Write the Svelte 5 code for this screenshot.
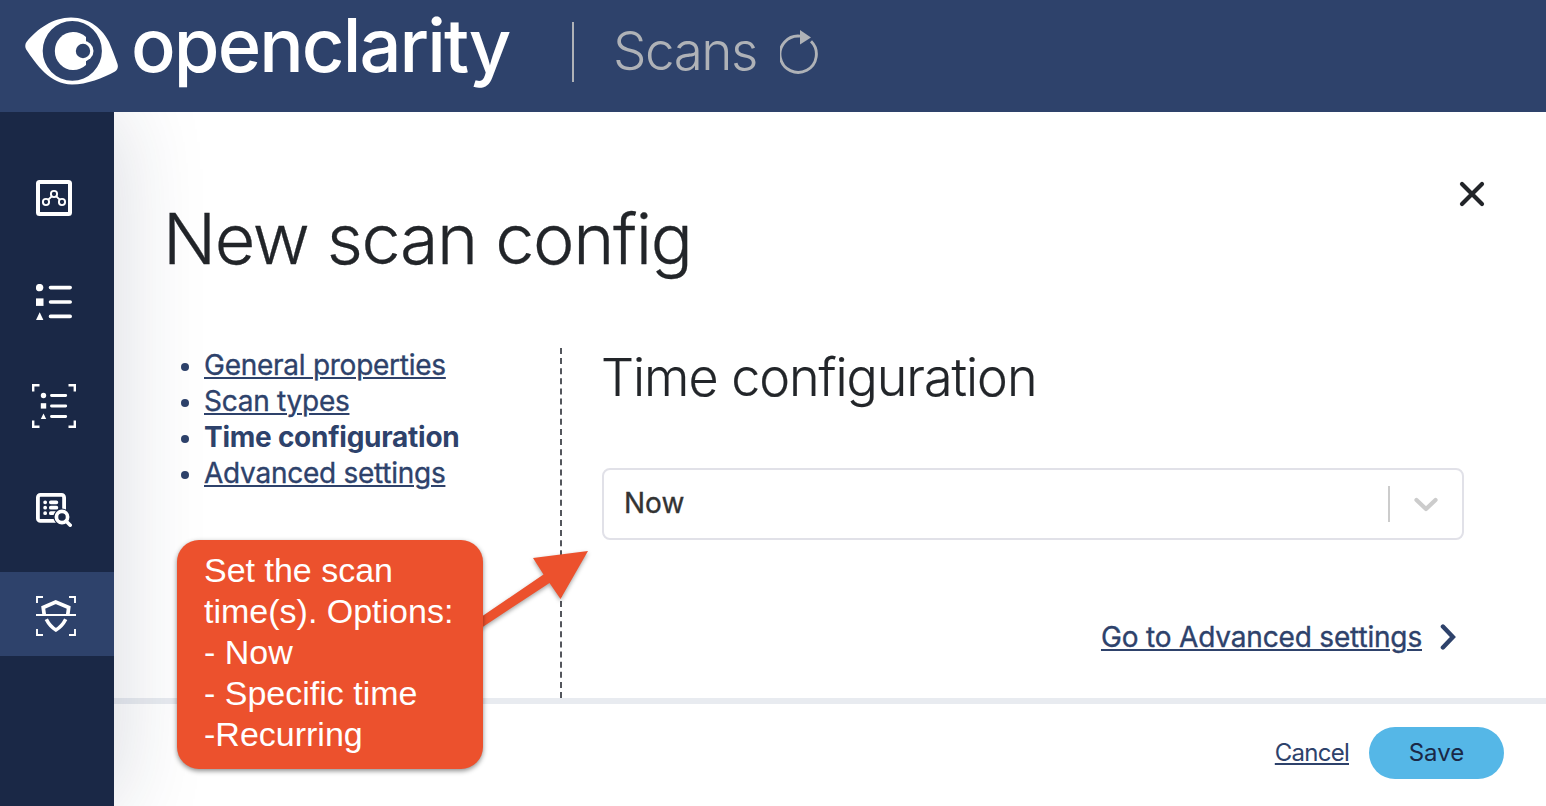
<script>
  const links = ['General properties', 'Scan types', 'Time configuration', 'Advanced settings'];
  const active = 'Time configuration';
  const note = ['Set the scan', 'time(s). Options:', '- Now', '- Specific time', '-Recurring'];
</script>

<div class="page">
  <header>
    <svg class="eye" width="94" height="69" viewBox="0 0 94 69">
      <path fill="#fff" fill-rule="evenodd" d="M1.500 25C12 12 28 0.500 46 0.500C65 0.500 78 13 84 25C87 32 90 40 92.500 47C93.500 50 92.500 53 90 54.500C78 61 62 67.500 47 67.500C25 67.500 11 47 1.200 32.500C-0.200 30 0 27 1.500 25ZM47.300 4A29.600 29.900 0 1 0 47.300 63.800A29.600 29.900 0 1 0 47.300 4Z" />
      <path d="M61 20V48A18.600 19 0 1 1 61 20Z" fill="#fff" />
      <circle cx="58.200" cy="34" r="10.300" fill="#fff" />
      <circle cx="58" cy="34" r="7.200" fill="#2e426b" />
    </svg>
    <span class="brand">openclarity</span>
    <span class="rule"></span>
    <span class="crumb">Scans</span>
    <svg class="reload" width="41" height="46" viewBox="0 0 41 46">
      <path d="M31 11.300A18.200 18.200 0 1 1 20 6.100" fill="none" stroke="#afb2b7" stroke-width="2.900" />
      <path d="M20 0L31 7.500L20 14.500Z" fill="#afb2b7" />
    </svg>
  </header>

  <div class="body">
    <nav>
      <a class="item" href="#dashboard" aria-label="Dashboard">
        <svg width="36" height="36" viewBox="0 0 36 36" fill="none" stroke="#fff">
          <rect x="2" y="2" width="32" height="32" rx="1.500" stroke-width="4" />
          <g stroke-width="1.900">
            <circle cx="10" cy="22" r="3.100" />
            <circle cx="18" cy="14" r="3.100" />
            <circle cx="26" cy="22" r="3.100" />
            <path d="M12.300 19.700L15.700 16.300M20.300 16.300L23.700 19.700" />
          </g>
        </svg>
      </a>
      <a class="item" href="#assets" aria-label="Assets">
        <svg width="36" height="36" viewBox="0 0 36 36" fill="#fff">
          <circle cx="3.600" cy="3.600" r="3.700" />
          <rect x="0" y="14.400" width="7.500" height="7.500" />
          <path d="M3.700 28.300L7.400 36H0Z" />
          <path d="M14.500 3.600H34.200M14.500 18H34.200M14.500 32.400H34.200" stroke="#fff" stroke-width="3.600" stroke-linecap="round" />
        </svg>
      </a>
      <a class="item" href="#asset-scans" aria-label="Asset scans">
        <svg width="44" height="44" viewBox="0 0 44 44" fill="#fff">
          <path d="M1.200 7.500V1.200H7.500M36.500 1.200H42.800V7.500M42.800 36.500V42.800H36.500M7.500 42.800H1.200V36.500" fill="none" stroke="#fff" stroke-width="2.400" />
          <circle cx="11.500" cy="11.500" r="2.700" />
          <rect x="8.800" y="19.200" width="5.400" height="5.400" />
          <path d="M11.500 29.500L14.200 35H8.800Z" />
          <path d="M19.500 11.500H33.700M19.500 22H33.700M19.500 32.500H33.700" stroke="#fff" stroke-width="2.900" stroke-linecap="round" />
        </svg>
      </a>
      <a class="item" href="#findings" aria-label="Findings">
        <svg width="36" height="34" viewBox="0 0 36 34" fill="none" stroke="#fff">
          <rect x="1.900" y="1.900" width="26.200" height="26" rx="2.500" stroke-width="3.800" />
          <path d="M9.100 9.300H9.200M9.100 14.700H9.200M9.100 20.200H9.200" stroke-width="3.700" stroke-linecap="round" />
          <path d="M14.800 9.300H20.400M14.800 14.700H20.400M14.800 20.200H19" stroke-width="3.700" stroke-linecap="round" />
          <circle cx="26" cy="24" r="8.600" fill="#1a2846" stroke="none" />
          <circle cx="26" cy="24" r="5.600" stroke-width="3.700" />
          <path d="M30 28L34.200 32.200" stroke-width="3.600" stroke-linecap="round" />
        </svg>
      </a>
      <a class="item current" href="#scans" aria-label="Scans">
        <svg width="40" height="40" viewBox="0 0 40 40" fill="none" stroke="#fff">
          <path d="M1 7V1H7M33 1H39V7M39 33V39H33M7 39H1V33" stroke-width="1.900" />
          <path d="M0 19H40" stroke-width="2" />
          <path d="M8.200 18.500L7.200 11.500L19.700 6L32.700 11.500L31.800 18.500" stroke-width="3.700" />
          <path d="M10.300 23.300Q14 30.500 19.900 34Q26 30.500 29.700 23.300" stroke-width="3.600" />
        </svg>
      </a>
    </nav>

    <main>
      <button class="close" aria-label="Close">
        <svg width="26" height="26" viewBox="0 0 26 26"><path d="M3 3L23 23M23 3L3 23" stroke="#222529" stroke-width="4.200" stroke-linecap="round" /></svg>
      </button>
      <h1>New scan config</h1>
      <div class="cols">
        <ul>
          {#each links as link}
            <li>{#if link === active}<b>{link}</b>{:else}<a href="#step">{link}</a>{/if}</li>
          {/each}
        </ul>
        <section>
          <h2>Time configuration</h2>
          <div class="select">
            <span>Now</span>
            <i></i>
            <svg width="26" height="18" viewBox="0 0 26 18"><path d="M3.500 5L13 14L22.500 5" fill="none" stroke="#ccc" stroke-width="4.200" stroke-linecap="round" stroke-linejoin="round" /></svg>
          </div>
          <div class="next">
            <a href="#next">Go to Advanced settings</a>
            <svg width="18" height="28" viewBox="0 0 18 28"><path d="M2.900 3.500L12.900 14L2.900 24.500" fill="none" stroke="#2e426b" stroke-width="4.400" stroke-linecap="round" /></svg>
          </div>
        </section>
      </div>
      <footer>
        <a href="#cancel">Cancel</a>
        <button class="save">Save</button>
      </footer>
    </main>
  </div>

  <svg class="arrow" width="130" height="100" viewBox="0 0 130 100">
    <path d="M0 84.500L73.500 34.500L63 18L118 11L90.500 59L79.500 43L13 86.700L0 95Z" fill="#ec512d" />
  </svg>
  <div class="callout">
    {#each note as line}<div>{line}</div>{/each}
  </div>
</div>

<style>
  :global(body) { margin: 0; }
  .page {
    position: relative;
    width: 1546px;
    height: 806px;
    overflow: hidden;
    background: #fff;
    color: #222529;
    font: 400 28px/36px Inter, sans-serif;
  }
  header { height: 112px; background: #2e426b; display: flex; position: relative; z-index: 2; }
  .eye { margin: 17px 12px 0 25px; flex: none; }
  .brand { width: 441px; font-size: 74px; line-height: 90px; font-weight: 500; letter-spacing: -1.9px; color: #fff; }
  .rule { width: 2px; height: 60px; margin-top: 22px; background: #afb2b7; }
  .crumb { margin: 19px 23px 0 39px; font-size: 53px; line-height: 64px; font-weight: 300; letter-spacing: -1.5px; color: #afb2b7; }
  .reload { margin-top: 30px; }

  .body { display: flex; height: 694px; }
  nav {
    position: relative;
    z-index: 1;
    width: 114px;
    box-sizing: border-box;
    padding-top: 44px;
    display: flex;
    flex-direction: column;
    gap: 20px;
    background: #1a2846;
    box-shadow: 0 0 92px rgba(26, 40, 70, 0.18);
  }
  .item { height: 84px; box-sizing: border-box; padding-right: 6px; display: grid; place-items: center; }
  .current { background: #2e426b; padding: 4px 2px 0 0; }
  .item svg { display: block; }

  main { position: relative; width: 1432px; display: flex; flex-direction: column; }
  .close { position: absolute; left: 1345px; top: 69px; padding: 0; border: 0; background: none; line-height: 0; }
  h1 { margin: 85px 0 67px 49px; font-size: 70px; line-height: 84px; font-weight: 300; letter-spacing: -1.36px; -webkit-text-stroke: 0.3px; }
  .cols { display: flex; height: 350px; }
  ul { list-style: none; width: 446px; box-sizing: border-box; margin: -1px 0 0; padding: 0 0 0 90px; color: #2e426b; letter-spacing: -0.26px; }
  li { display: flex; align-items: center; }
  li::before { content: ''; width: 8px; height: 8px; margin: 3px 15px 0 -23px; border-radius: 50%; background: #2e426b; }
  b { font-weight: 700; letter-spacing: -0.25px; }
  a { color: #2e426b; text-decoration: underline; text-decoration-thickness: 2px; text-underline-offset: 2px; }
  li a, .next a, .select span { -webkit-text-stroke: 0.35px; }
  section { flex: 1; border-left: 2px dashed #53565c; padding: 0 82px 0 40px; }
  h2 { margin: -1px 0 59px -1px; font-size: 52px; line-height: 62px; font-weight: 300; letter-spacing: -1.04px; -webkit-text-stroke: 0.2px; }
  .select { height: 72px; box-sizing: border-box; border: 2px solid #e1e1e8; border-radius: 8px; display: flex; align-items: center; padding: 0 23px 0 20px; color: #333; }
  .select span { flex: 1; margin-top: -2px; }
  .select i { width: 2px; height: 36px; margin-right: 23px; background: #ccc; }
  .next { margin-top: 79px; display: flex; justify-content: flex-end; align-items: center; gap: 18px; padding-right: 6px; letter-spacing: -0.17px; }
  footer { flex: 1; border-top: 6px solid #e8ebf0; padding: 23px 42px 0 0; display: flex; justify-content: flex-end; align-items: flex-start; gap: 20px; font-size: 24px; line-height: 52px; }
  footer a { letter-spacing: -0.75px; }
  .save { width: 135px; height: 52px; padding: 0; border: 0; border-radius: 26px; background: #55b7e7; color: #1a2846; font: inherit; }

  .callout {
    position: absolute;
    left: 177px;
    top: 540px;
    width: 306px;
    height: 229px;
    box-sizing: border-box;
    padding: 10px 0 0 27px;
    border-radius: 22px;
    background: #ec512d;
    box-shadow: 0 2px 5px rgba(0, 0, 0, 0.45);
    color: #fff;
    font: 34px/41px 'Liberation Sans', sans-serif;
    z-index: 3;
  }
  .arrow { position: absolute; left: 470px; top: 540px; z-index: 3; filter: drop-shadow(0 2px 2px rgba(0, 0, 0, 0.35)); }
</style>
